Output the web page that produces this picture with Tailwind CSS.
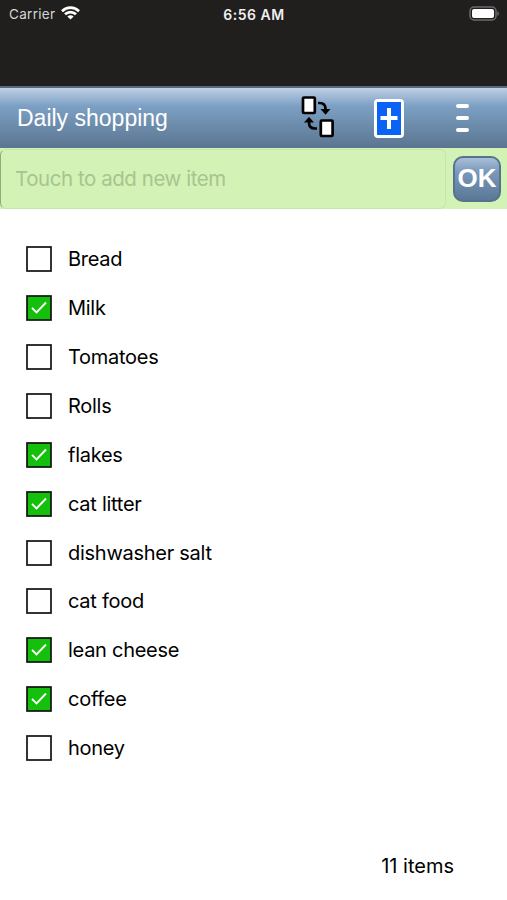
<!DOCTYPE html>
<html lang="en">
  <head>
    <meta charset="UTF-8" />
    <meta name="viewport" content="width=device-width, initial-scale=1.0" />
    <script src="https://cdn.jsdelivr.net/npm/@tailwindcss/browser@4"></script>
    <title>Daily shopping</title>
  </head>
  <body class="bg-white font-['Inter',sans-serif] text-black">
    <div class="flex h-[900px] w-[507px] flex-col overflow-hidden">
      <!-- status bar -->
      <div class="h-[86px] shrink-0 bg-[#211f1e]">
        <div class="grid h-7 grid-cols-3 items-center pr-2 pl-[9px] text-[13.5px]">
          <div class="flex items-center gap-1.5 tracking-[0.3px] text-[#d6d5d4]">
            <span>Carrier</span>
            <svg class="-mt-0.5 h-[14px] w-[19px]" viewBox="0 0 19 14" fill="none" stroke="#fff" stroke-width="2.7">
              <path d="M1 5.2C5.8.5 13.2.5 18 5.2" />
              <path d="M4 8.3c3.1-3 7.9-3 11 0" />
              <path d="M6.4 10.4c1.8-1.6 4.4-1.6 6.2 0L9.5 13.5z" fill="#fff" stroke="none" />
            </svg>
          </div>
          <span class="text-center text-[14px] font-semibold tracking-[0.5px] whitespace-nowrap text-[#eee]">6:56 AM</span>
          <svg class="-mt-0.5 h-[15px] w-[31px] justify-self-end" viewBox="0 0 31 15">
            <rect x="2" y="1" width="26" height="13" rx="4" fill="none" stroke="#6b6a69" stroke-width="1.5" />
            <rect x="4" y="3" width="22" height="9" rx="2" fill="#fff" />
            <path d="M29.3 5v5q1.7-1 1.7-2.5t-1.7-2.5z" fill="#6b6a69" />
          </svg>
        </div>
      </div>

      <!-- toolbar -->
      <div
        class="flex h-[62px] shrink-0 items-center border-t-2 border-[#536a80] bg-linear-to-b from-[#c0cfe4] via-[#7ca0c4] via-30% to-[#5b7590] pl-[17px]"
      >
        <h1 class="w-[284px] font-['Liberation_Sans',sans-serif] text-[23px] text-white">Daily shopping</h1>
        <svg class="-mt-0.5 h-[44px] w-[34px]" viewBox="0 0 34 44" fill="none" stroke="#000" stroke-width="2.7">
          <rect x="2" y="2.5" width="11.8" height="15.5" rx="1" fill="#fff" />
          <rect x="19.8" y="25.5" width="11.8" height="15.5" rx="1" fill="#fff" />
          <path d="M17 8h1.5q6 0 6 6v1.500" />
          <path d="M19.5 14h10l-5 5.8z" fill="#000" stroke="none" />
          <path d="M16 33.5h-2q-6 0-6-6V26" />
          <path d="M3 27.5h10L8 21.7z" fill="#000" stroke="none" />
        </svg>
        <svg class="ml-[39px] h-[39px] w-[30px]" viewBox="0 0 30 39">
          <rect width="30" height="39" rx="4" fill="#fff" />
          <rect x="3" y="3" width="24" height="33" fill="#0b63f6" />
          <path d="M15 9v21M6.5 19h17" stroke="#fff" stroke-width="4" />
        </svg>
        <div class="ml-[52px] flex w-[13px] flex-col gap-2">
          <span class="h-1 rounded-sm bg-white"></span>
          <span class="h-1 rounded-sm bg-white"></span>
          <span class="h-1 rounded-sm bg-white"></span>
        </div>
      </div>

      <!-- new item -->
      <div class="flex h-[61px] shrink-0 items-center bg-[#d2f3b5]">
        <input
          type="text"
          placeholder="Touch to add new item"
          class="h-[60px] w-[446px] rounded-md border border-[#c5e6aa] border-l-[#93ab7f] pl-[14px] text-[20.5px] tracking-[-0.45px] placeholder:text-[#a9c391]"
        />
        <button
          class="ml-[7px] flex h-[46px] w-[48px] items-center justify-center rounded-[10px] border-2 border-[#57728f] bg-linear-to-b from-[#a9bfd8] via-[#7897ba] via-35% to-[#5b7896] font-['Liberation_Sans',sans-serif] text-[26px] font-bold text-white"
        >
          OK
        </button>
      </div>

      <!-- items -->
      <ul id="items" class="mt-[26px] text-[20px] tracking-[-0.27px]"></ul>
      <p id="count" class="mt-[79px] pr-[53px] text-right text-[20px]"></p>
    </div>
  </body>
  <script>
    const items = [
      ["Bread", false],
      ["Milk", true],
      ["Tomatoes", false],
      ["Rolls", false],
      ["flakes", true],
      ["cat litter", true],
      ["dishwasher salt", false],
      ["cat food", false],
      ["lean cheese", true],
      ["coffee", true],
      ["honey", false],
    ];
    const list = document.querySelector("#items");
    items.forEach(([name, done]) => {
      list.innerHTML += `
        <li class="flex h-[48.87px] items-center gap-4 pl-[26px]">
          <svg class="h-[26px] w-[26px]" viewBox="0 0 26 26" fill="none">
            <rect x="1" y="1" width="24" height="24" fill="${done ? "#15c00c" : "#fff"}" stroke="#111" stroke-width="1.7" />
            ${done ? `<path d="M6 12.8l4.5 4.5 9.5-9.8" stroke="#fff" stroke-width="1.9" />` : ""}
          </svg>
          <span>${name}</span>
        </li>`;
    });
    document.querySelector("#count").textContent = `${items.length} items`;
  </script>
</html>
